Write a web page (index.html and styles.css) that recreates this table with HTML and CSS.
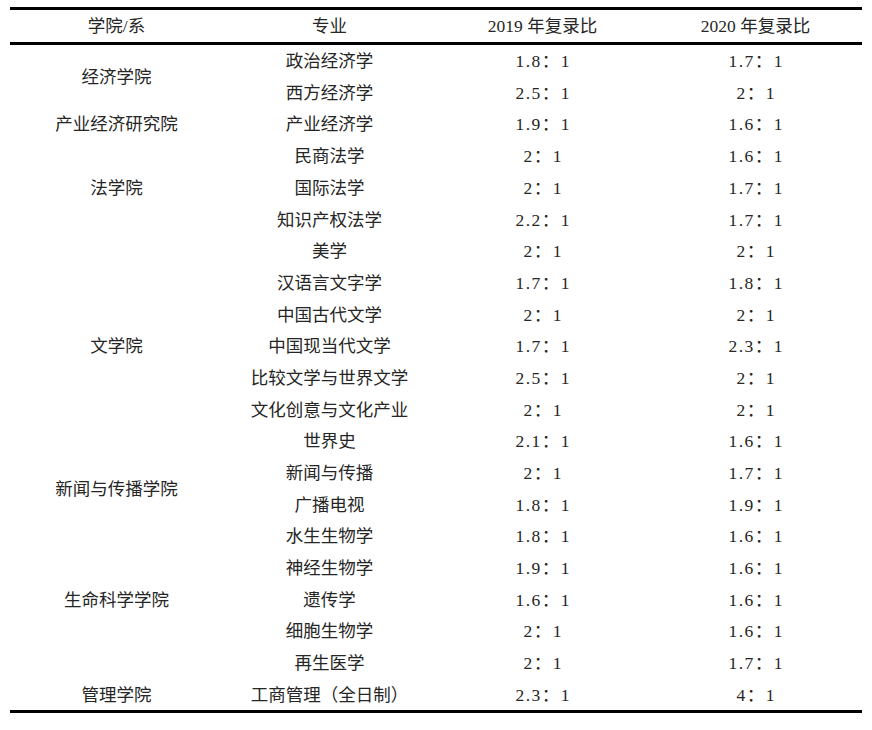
FILE: index.html
```html
<!DOCTYPE html>
<html lang="zh-CN">
<head>
<meta charset="utf-8">
<title>复录比</title>
<link rel="stylesheet" href="styles.css">
</head>
<body>
<table class="ratio-table">
  <thead>
    <tr><th>学院/系</th><th>专业</th><th>2019 年复录比</th><th>2020 年复录比</th></tr>
  </thead>
  <tbody>
    <tr><td rowspan="2">经济学院</td><td>政治经济学</td><td class="num">1.8：1</td><td class="num">1.7：1</td></tr>
    <tr><td>西方经济学</td><td class="num">2.5：1</td><td class="num">2：1</td></tr>
    <tr><td>产业经济研究院</td><td>产业经济学</td><td class="num">1.9：1</td><td class="num">1.6：1</td></tr>
    <tr><td rowspan="3">法学院</td><td>民商法学</td><td class="num">2：1</td><td class="num">1.6：1</td></tr>
    <tr><td>国际法学</td><td class="num">2：1</td><td class="num">1.7：1</td></tr>
    <tr><td>知识产权法学</td><td class="num">2.2：1</td><td class="num">1.7：1</td></tr>
    <tr><td rowspan="7">文学院</td><td>美学</td><td class="num">2：1</td><td class="num">2：1</td></tr>
    <tr><td>汉语言文字学</td><td class="num">1.7：1</td><td class="num">1.8：1</td></tr>
    <tr><td>中国古代文学</td><td class="num">2：1</td><td class="num">2：1</td></tr>
    <tr><td>中国现当代文学</td><td class="num">1.7：1</td><td class="num">2.3：1</td></tr>
    <tr><td>比较文学与世界文学</td><td class="num">2.5：1</td><td class="num">2：1</td></tr>
    <tr><td>文化创意与文化产业</td><td class="num">2：1</td><td class="num">2：1</td></tr>
    <tr><td>世界史</td><td class="num">2.1：1</td><td class="num">1.6：1</td></tr>
    <tr><td rowspan="2">新闻与传播学院</td><td>新闻与传播</td><td class="num">2：1</td><td class="num">1.7：1</td></tr>
    <tr><td>广播电视</td><td class="num">1.8：1</td><td class="num">1.9：1</td></tr>
    <tr><td rowspan="5">生命科学学院</td><td>水生生物学</td><td class="num">1.8：1</td><td class="num">1.6：1</td></tr>
    <tr><td>神经生物学</td><td class="num">1.9：1</td><td class="num">1.6：1</td></tr>
    <tr><td>遗传学</td><td class="num">1.6：1</td><td class="num">1.6：1</td></tr>
    <tr><td>细胞生物学</td><td class="num">2：1</td><td class="num">1.6：1</td></tr>
    <tr><td>再生医学</td><td class="num">2：1</td><td class="num">1.7：1</td></tr>
    <tr><td>管理学院</td><td>工商管理（全日制）</td><td class="num">2.3：1</td><td class="num">4：1</td></tr>
  </tbody>
</table>
</body>
</html>
```
FILE: styles.css
```css
html, body {
  margin: 0;
  padding: 0;
  background: #ffffff;
}

body {
  padding: 7px 0 0 10px;
}

.ratio-table {
  width: 852px;
  border-collapse: collapse;
  table-layout: fixed;
  border-top: 3px solid #000;
  border-bottom: 3px solid #000;
  font-family: "Liberation Serif", "Noto Sans CJK SC", serif;
  font-size: 17.5px;
  color: #262626;
}

.ratio-table thead tr {
  border-bottom: 3px solid #000;
}

.ratio-table th {
  font-weight: normal;
  height: 30px;
  padding: 2px 0 0;
  text-align: center;
  vertical-align: middle;
  line-height: 1;
}

.ratio-table td {
  height: 29.7px;
  padding: 2px 0 0;
  text-align: center;
  vertical-align: middle;
  line-height: 1;
}

.ratio-table .num {
  letter-spacing: 1.5px;
  padding-left: 1.5px;
}
```
